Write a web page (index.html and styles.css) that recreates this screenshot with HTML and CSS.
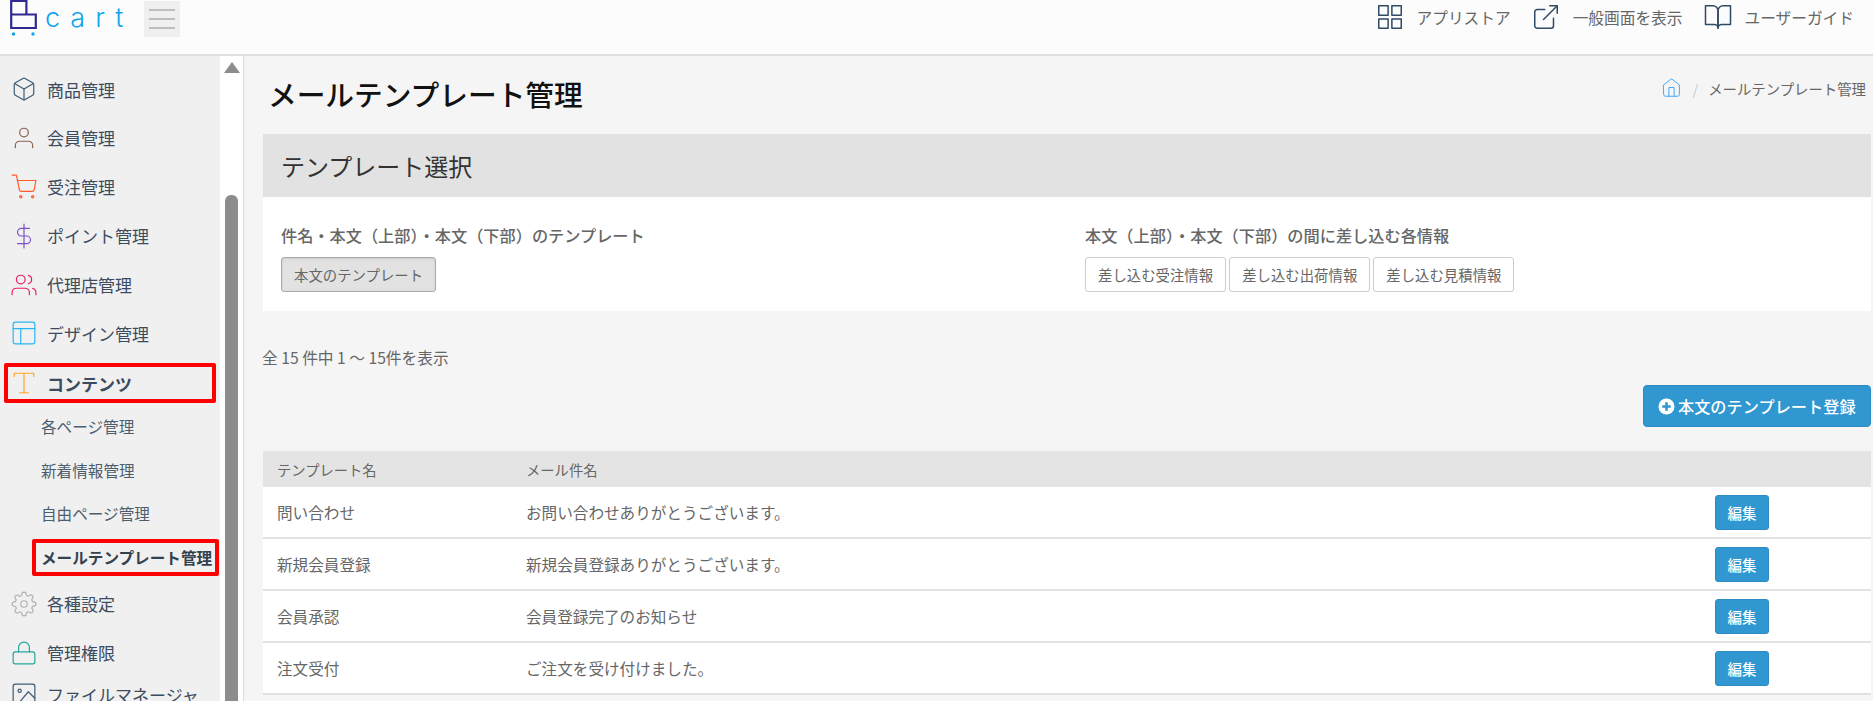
FILE: index.html
```html
<!DOCTYPE html>
<html lang="ja">
<head>
<meta charset="utf-8">
<title>メールテンプレート管理</title>
<link rel="stylesheet" href="styles.css">
</head>
<body>
<header class="topbar">
  <div class="brand">
    <svg class="logo" viewBox="0 0 27 37" fill="none">
      <path d="M1.200 14.500h24.600v13.500H1.200z M1.200 14.500V1h15.200v13.500" stroke="#2e2a8f" stroke-width="2.200"/>
      <circle cx="3.500" cy="34" r="1.700" fill="#12a5ee"/>
      <circle cx="23" cy="34" r="1.700" fill="#12a5ee"/>
    </svg>
    <span class="wordmark">cart</span>
    <button class="burger" type="button"><i></i><i></i><i></i></button>
  </div>
  <nav class="toplinks">
    <a class="toplink">
      <svg class="ico ico-top" viewBox="0 0 24 24"><rect x="3" y="3" width="7.500" height="7.500"/><rect x="13.500" y="3" width="7.500" height="7.500"/><rect x="13.500" y="13.500" width="7.500" height="7.500"/><rect x="3" y="13.500" width="7.500" height="7.500"/></svg>
      <span>アプリストア</span>
    </a>
    <a class="toplink">
      <svg class="ico ico-top" viewBox="0 0 24 24"><path d="M18 13v6a2 2 0 0 1-2 2H5a2 2 0 0 1-2-2V8a2 2 0 0 1 2-2h6"/><polyline points="15 3 21 3 21 9"/><line x1="10" y1="14" x2="21" y2="3"/></svg>
      <span>一般画面を表示</span>
    </a>
    <a class="toplink">
      <svg class="ico ico-top" viewBox="0 0 24 24"><path d="M2 3h6a4 4 0 0 1 4 4v14a3 3 0 0 0-3-3H2z"/><path d="M22 3h-6a4 4 0 0 0-4 4v14a3 3 0 0 1 3-3h7z"/></svg>
      <span>ユーザーガイド</span>
    </a>
  </nav>
</header>

<div class="layout">
  <aside class="sidebar">
    <a class="item">
      <svg class="ico c-slate" viewBox="0 0 24 24"><path d="M21 16V8a2 2 0 0 0-1-1.730l-7-4a2 2 0 0 0-2 0l-7 4A2 2 0 0 0 3 8v8a2 2 0 0 0 1 1.730l7 4a2 2 0 0 0 2 0l7-4A2 2 0 0 0 21 16z"/><polyline points="3.270 6.960 12 12.010 20.730 6.960"/><line x1="12" y1="22.080" x2="12" y2="12"/></svg>
      <span>商品管理</span>
    </a>
    <a class="item">
      <svg class="ico c-brown" viewBox="0 0 24 24"><path d="M20 21v-2a4 4 0 0 0-4-4H8a4 4 0 0 0-4 4v2"/><circle cx="12" cy="7" r="4"/></svg>
      <span>会員管理</span>
    </a>
    <a class="item">
      <svg class="ico c-orange" viewBox="0 0 24 24"><circle cx="9" cy="21" r="1"/><circle cx="20" cy="21" r="1"/><path d="M1 1h4l2.680 13.390a2 2 0 0 0 2 1.610h9.720a2 2 0 0 0 2-1.610L23 6H6"/></svg>
      <span>受注管理</span>
    </a>
    <a class="item">
      <svg class="ico c-purple" viewBox="0 0 24 24"><line x1="12" y1="1" x2="12" y2="23"/><path d="M17 5H9.500a3.500 3.500 0 0 0 0 7h5a3.500 3.500 0 0 1 0 7H6"/></svg>
      <span>ポイント管理</span>
    </a>
    <a class="item">
      <svg class="ico c-pink" viewBox="0 0 24 24"><path d="M17 21v-2a4 4 0 0 0-4-4H5a4 4 0 0 0-4 4v2"/><circle cx="9" cy="7" r="4"/><path d="M23 21v-2a4 4 0 0 0-3-3.870"/><path d="M16 3.130a4 4 0 0 1 0 7.750"/></svg>
      <span>代理店管理</span>
    </a>
    <a class="item">
      <svg class="ico c-sky" viewBox="0 0 24 24"><rect x="2" y="2" width="20" height="20" rx="2"/><line x1="2" y1="8" x2="22" y2="8"/><line x1="9" y1="22" x2="9" y2="8"/></svg>
      <span>デザイン管理</span>
    </a>
    <a class="item item-current">
      <svg class="ico c-amber" viewBox="0 0 24 24"><polyline points="3 6 3 3 21 3 21 6"/><line x1="8" y1="21" x2="16" y2="21"/><line x1="12" y1="3" x2="12" y2="21"/></svg>
      <span>コンテンツ</span>
    </a>
    <ul class="submenu">
      <li class="subitem">各ページ管理</li>
      <li class="subitem">新着情報管理</li>
      <li class="subitem">自由ページ管理</li>
      <li class="subitem subitem-current">メールテンプレート管理</li>
    </ul>
    <a class="item">
      <svg class="ico c-gray" viewBox="0 0 24 24"><circle cx="12" cy="12" r="3"/><path d="M19.400 15a1.650 1.650 0 0 0 .33 1.820l.06.06a2 2 0 0 1 0 2.830 2 2 0 0 1-2.830 0l-.06-.06a1.650 1.650 0 0 0-1.820-.33 1.650 1.650 0 0 0-1 1.510V21a2 2 0 0 1-2 2 2 2 0 0 1-2-2v-.09A1.650 1.650 0 0 0 9 19.400a1.650 1.650 0 0 0-1.820.33l-.06.06a2 2 0 0 1-2.830 0 2 2 0 0 1 0-2.830l.06-.06a1.650 1.650 0 0 0 .33-1.820 1.650 1.650 0 0 0-1.510-1H3a2 2 0 0 1-2-2 2 2 0 0 1 2-2h.09A1.650 1.650 0 0 0 4.600 9a1.650 1.650 0 0 0-.33-1.820l-.06-.06a2 2 0 0 1 0-2.830 2 2 0 0 1 2.830 0l.06.06a1.650 1.650 0 0 0 1.820.33H9a1.650 1.650 0 0 0 1-1.510V3a2 2 0 0 1 2-2 2 2 0 0 1 2 2v.09a1.650 1.650 0 0 0 1 1.510 1.650 1.650 0 0 0 1.820-.33l.06-.06a2 2 0 0 1 2.830 0 2 2 0 0 1 0 2.830l-.06.06a1.650 1.650 0 0 0-.33 1.820V9a1.650 1.650 0 0 0 1.510 1H21a2 2 0 0 1 2 2 2 2 0 0 1-2 2h-.09a1.650 1.650 0 0 0-1.510 1z"/></svg>
      <span>各種設定</span>
    </a>
    <a class="item">
      <svg class="ico c-teal" viewBox="0 0 24 24"><rect x="2" y="11" width="20" height="11" rx="2"/><path d="M7 11V7a5 5 0 0 1 10 0v4"/></svg>
      <span>管理権限</span>
    </a>
    <a class="item item-last">
      <svg class="ico c-slate" viewBox="0 0 24 24"><rect x="2" y="2" width="20" height="20" rx="2"/><circle cx="8" cy="8" r="1.500"/><polyline points="22 15 16 9 5 22"/></svg>
      <span>ファイルマネージャ</span>
    </a>
  </aside>
  <div class="rail">
    <div class="rail-arrow"></div>
    <div class="rail-thumb"></div>
  </div>

  <main class="main">
    <div class="pagehead">
      <h1 class="pagetitle">メールテンプレート管理</h1>
      <div class="crumbs">
        <svg class="ico ico-home" viewBox="0 0 24 24"><path d="M3 9l9-7 9 7v11a2 2 0 0 1-2 2H5a2 2 0 0 1-2-2z"/><polyline points="9 22 9 12 15 12 15 22"/></svg>
        <span class="crumb-sep">/</span>
        <span>メールテンプレート管理</span>
      </div>
    </div>

    <section class="panel">
      <h2 class="panel-title">テンプレート選択</h2>
      <div class="panel-body">
        <div class="group">
          <p class="group-label">件名・本文（上部）・本文（下部）のテンプレート</p>
          <div class="btnrow"><button class="btn btn-on" type="button">本文のテンプレート</button></div>
        </div>
        <div class="group">
          <p class="group-label">本文（上部）・本文（下部）の間に差し込む各情報</p>
          <div class="btnrow">
            <button class="btn" type="button">差し込む受注情報</button>
            <button class="btn" type="button">差し込む出荷情報</button>
            <button class="btn" type="button">差し込む見積情報</button>
          </div>
        </div>
      </div>
    </section>

    <p class="count">全 15 件中 1 ～ 15件を表示</p>

    <div class="actions">
      <button class="btn-add" type="button">
        <svg class="plus" viewBox="0 0 16 16"><circle cx="8" cy="8" r="7.500" fill="#fff"/><path d="M8 4v8M4 8h8" stroke="#3097d1" stroke-width="2.400"/></svg>
        <span>本文のテンプレート登録</span>
      </button>
    </div>

    <div class="tablewrap">
      <div class="row row-head"><div class="c-name">テンプレート名</div><div class="c-subj">メール件名</div><div class="c-act"></div></div>
      <div class="row"><div class="c-name">問い合わせ</div><div class="c-subj">お問い合わせありがとうございます。</div><div class="c-act"><button class="btn-edit" type="button">編集</button></div></div>
      <div class="row"><div class="c-name">新規会員登録</div><div class="c-subj">新規会員登録ありがとうございます。</div><div class="c-act"><button class="btn-edit" type="button">編集</button></div></div>
      <div class="row"><div class="c-name">会員承認</div><div class="c-subj">会員登録完了のお知らせ</div><div class="c-act"><button class="btn-edit" type="button">編集</button></div></div>
      <div class="row"><div class="c-name">注文受付</div><div class="c-subj">ご注文を受け付けました。</div><div class="c-act"><button class="btn-edit" type="button">編集</button></div></div>
    </div>
  </main>
</div>
</body>
</html>
```
FILE: styles.css
```css
* { box-sizing: border-box; }
html, body { margin: 0; height: 100%; overflow: hidden; }
body {
  font-family: "Noto Sans CJK JP", "Noto Sans", sans-serif;
  color: #666;
  background: #f5f5f5;
  display: flex;
  flex-direction: column;
  height: 701px;
}
.ico { fill: none; stroke: currentColor; stroke-width: 1.100; stroke-linecap: round; stroke-linejoin: round; flex: none; }

/* top bar */
.topbar {
  height: 56px;
  flex: none;
  background: #fcfcfc;
  border-bottom: 2px solid #e0e0e0;
  display: flex;
  justify-content: space-between;
  align-items: flex-start;
}
.brand { display: flex; align-items: flex-start; padding-left: 10px; }
.logo { width: 27px; height: 37px; display: block; }
.wordmark {
  margin-left: 8px;
  font-family: "Inter", sans-serif;
  font-weight: 300;
  font-size: 27px;
  line-height: 36px;
  letter-spacing: 10px;
  color: #12a5ee;
  width: 99px;
}
.burger {
  margin: 1px 0 0 0;
  width: 36px;
  height: 36px;
  padding: 0;
  border: 0;
  background: #efefef;
  display: flex;
  flex-direction: column;
  justify-content: center;
  align-items: center;
  gap: 7px;
}
.burger i { display: block; width: 26px; height: 2px; background: #bdbdbd; }
.toplinks { display: flex; padding: 0 19px 0 0; gap: 20px; }
.toplink { display: flex; align-items: center; gap: 12px; font-size: 15.700px; line-height: 30px; color: #666; }
.toplink span { padding-top: 3px; }
.ico-top { width: 30px; height: 30px; color: #2f4a66; stroke-width: 1.200; }

/* layout */
.layout { flex: 1; display: flex; min-height: 0; }
.sidebar {
  width: 220px;
  flex: none;
  background: #f0f0f0;
  padding-top: 8.600px;
  overflow: hidden;
}
.item {
  display: flex;
  align-items: center;
  height: 48.900px;
  padding-left: 11px;
  gap: 10px;
  font-size: 17px;
  color: #3c4c5e;
  white-space: nowrap;
}
.item .ico { width: 26px; height: 26px; }
.item-current {
  height: 40px;
  margin: 5.400px 4px 2px 4px;
  padding-left: 7px;
  font-weight: 700;
  box-shadow: inset 0 0 0 4px #ff0000;
  border-radius: 2px;
}
.item-last { height: 35px; }
.c-slate { color: #3f5b75; }
.c-brown { color: #8a6254; }
.c-orange { color: #ff5a2a; }
.c-purple { color: #7a52c7; }
.c-pink { color: #e91e63; }
.c-sky { color: #29b6f6; }
.c-amber { color: #ffa726; }
.c-gray { color: #b0b0b0; }
.c-teal { color: #26a69a; }

.submenu { list-style: none; margin: 0; padding: 0; }
.subitem {
  height: 43.200px;
  padding-left: 41px;
  font-size: 15.600px;
  line-height: 43.200px;
  color: #4d5d6e;
  white-space: nowrap;
}
.subitem-current {
  height: 37px;
  line-height: 37px;
  margin: 4px 0 3.500px 32px;
  width: 187px;
  padding-left: 9px;
  font-weight: 700;
  font-size: 15.600px;
  color: #33404e;
  box-shadow: inset 0 0 0 4px #ff0000;
  border-radius: 2px;
}

.rail {
  width: 24px;
  flex: none;
  background: #fff;
  border-right: 1px solid #dcdcdc;
  display: flex;
  flex-direction: column;
  align-items: center;
  padding-top: 6px;
}
.rail-arrow {
  width: 0;
  height: 0;
  border-left: 8px solid transparent;
  border-right: 8px solid transparent;
  border-bottom: 11px solid #8c8c8c;
}
.rail-thumb {
  margin-top: 122px;
  width: 13px;
  flex: 1;
  background: #8c8c8c;
  border-radius: 6px 6px 0 0;
}

/* main */
.main { flex: 1; min-width: 0; padding: 0 2px 0 19px; overflow: hidden; }
.pagehead { display: flex; justify-content: space-between; align-items: flex-start; height: 78px; }
.pagetitle {
  margin: 15px 0 0 5px;
  font-size: 28.700px;
  line-height: 46px;
  font-weight: 500;
  color: #111;
}
.crumbs {
  display: flex;
  align-items: center;
  margin: 21px 5px 0 0;
  height: 22px;
  font-size: 14.400px;
  color: #666;
}
.ico-home { width: 21px; height: 21px; margin-top: -2px; color: #42a5f5; }
.crumb-sep { margin: 0 10px 0 10px; color: #c8c8c8; }

.panel { background: #fff; }
.panel-title {
  margin: 0;
  height: 63px;
  padding-left: 18px;
  background: #e2e2e2;
  font-size: 24px;
  font-weight: 400;
  line-height: 63px;
  color: #333;
}
.panel-body { display: flex; height: 114px; padding: 26px 18px 0; }
.group { flex: none; width: 804px; }
.group-label { margin: 0 0 10px; font-size: 16.200px; line-height: 24px; font-weight: 500; color: #666; }
.btnrow { display: flex; gap: 3px; }
.btn {
  height: 35px;
  padding: 0 12px;
  border: 1px solid #ccc;
  border-radius: 3px;
  background: #fff;
  font: inherit;
  font-size: 14.400px;
  color: #666;
}
.btn-on { background: #e2e2e2; border-color: #aaa; box-shadow: inset 0 1px 3px rgba(0, 0, 0, .1); }

.count { margin: 36px 0 0 -1px; font-size: 15.700px; line-height: 22px; color: #666; }
.actions { display: flex; justify-content: flex-end; margin-top: 16px; }
.btn-add {
  display: flex;
  align-items: center;
  gap: 3px;
  width: 228px;
  height: 42px;
  padding: 0 0 0 14px;
  border: 1px solid #2d8bc4;
  border-radius: 4px;
  background: #3097d1;
  color: #fff;
  font: inherit;
  font-size: 16.200px;
  font-weight: 500;
  white-space: nowrap;
}
.plus { width: 17px; height: 17px; flex: none; }

.tablewrap { margin-top: 24px; background: #fff; }
.row {
  display: grid;
  grid-template-columns: 263px 1fr 156px;
  align-items: center;
  height: 52px;
  border-bottom: 2px solid #e2e2e2;
  font-size: 15.600px;
  color: #666;
}
.row-head { height: 36px; background: #e4e4e4; border-bottom: 0; font-size: 14.300px; }
.c-name { padding-left: 14px; }
.c-act { display: flex; }
.btn-edit {
  width: 54px;
  height: 35px;
  padding: 0;
  border: 1px solid #2d8bc4;
  border-radius: 3px;
  background: #3097d1;
  color: #fff;
  font: inherit;
  font-size: 14.400px;
  font-weight: 500;
}
```
